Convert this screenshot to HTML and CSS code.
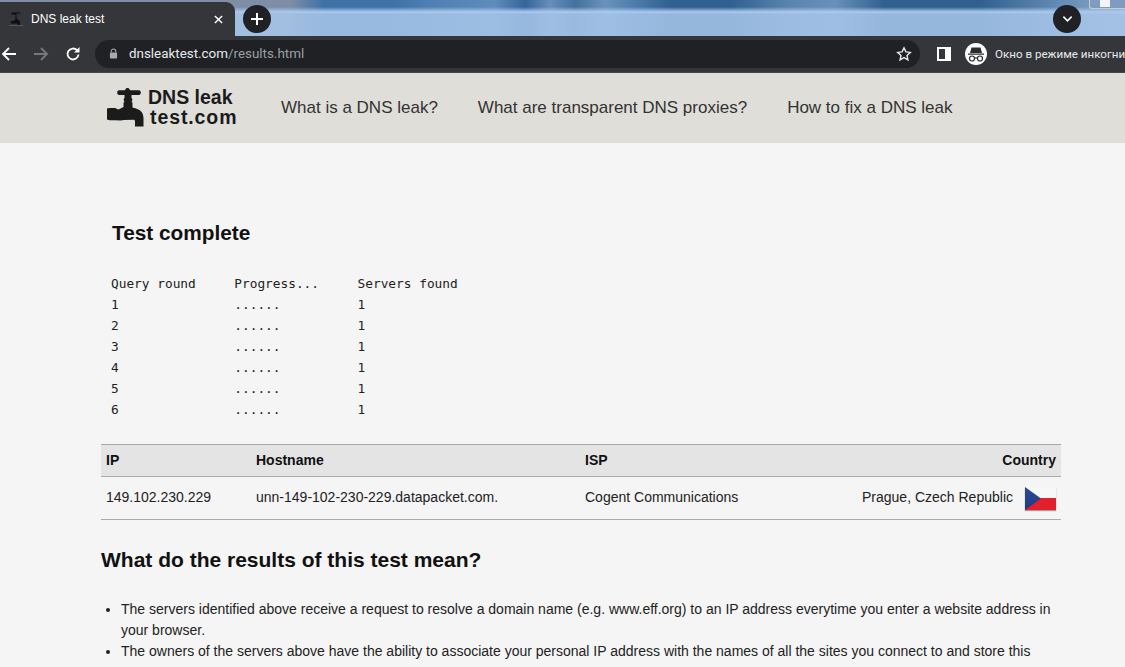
FILE: index.html
```html
<!DOCTYPE html>
<html lang="en">
<head>
<meta charset="utf-8">
<title>DNS leak test</title>
<link rel="stylesheet" href="styles.css">
</head>
<body>
<div class="browser">
  <div class="tabstrip">
    <div class="tab">
      <svg class="favicon" viewBox="0 0 16 16"><path d="M3.500 1.500h9v1h-4v5l3.500 3v3.500h-2.500v-1.500H3v-2.500h3l1.500-2v-4.500h-4z" fill="#0d0d0d"/><path d="M1 14.500h14" stroke="#55565a" stroke-width="1"/></svg>
      <span class="tab-title">DNS leak test</span>
      <svg class="tab-close" viewBox="0 0 10 10"><path d="M1 1l8 8M9 1l-8 8" stroke="#fff" stroke-width="1.600"/></svg>
    </div>
    <div class="round-btn new-tab"><svg viewBox="0 0 14 14"><path d="M7 1v12M1 7h12" stroke="#fff" stroke-width="2"/></svg></div>
    <div class="tabstrip-fill"></div>
    <div class="round-btn tab-search"><svg viewBox="0 0 12 8"><path d="M1.500 1.500L6 6l4.500-4.500" fill="none" stroke="#fff" stroke-width="1.800"/></svg></div>
    <div class="win-btn"><span class="win-glyph"></span></div>
  </div>
  <div class="toolbar">
    <svg class="nav-icon back" viewBox="0 0 16 16"><path d="M15 8H2M8 2L2 8l6 6" fill="none" stroke="#fff" stroke-width="1.800"/></svg>
    <svg class="nav-icon forward" viewBox="0 0 16 16"><path d="M1 8h13M8 2l6 6-6 6" fill="none" stroke="#77787a" stroke-width="1.800"/></svg>
    <svg class="nav-icon reload" viewBox="0 0 16 16"><path d="M13.500 8.500A5.500 5.500 0 1 1 12 4.200" fill="none" stroke="#fff" stroke-width="1.800"/><path d="M14.500 1v5.500H9z" fill="#fff"/></svg>
    <div class="omnibox">
      <svg class="lock" viewBox="0 0 10 12"><path d="M2.500 5V3.500a2.500 2.500 0 0 1 5 0V5" fill="none" stroke="#a8a9ab" stroke-width="1.200"/><rect x="1" y="5" width="8" height="6.500" rx="1" fill="#a8a9ab"/></svg>
      <span class="url"><span class="url-host">dnsleaktest.com</span>/results.html</span>
      <svg class="star" viewBox="0 0 16 16"><path d="M8 1.800l1.900 4.100 4.400.5-3.300 3 .9 4.400L8 11.600l-3.900 2.200.9-4.400-3.300-3 4.400-.5z" fill="none" stroke="#e8eaed" stroke-width="1.400"/></svg>
    </div>
    <div class="side-panel"></div>
    <div class="incognito">
      <span class="incognito-badge">
        <svg viewBox="0 0 22 22"><path d="M5 10l1.500-5.500h9L17 10zM3 10.500h16v1.300H3z" fill="#2b2c2e"/><circle cx="7" cy="15.500" r="2.500" fill="none" stroke="#2b2c2e" stroke-width="1.200"/><circle cx="15" cy="15.500" r="2.500" fill="none" stroke="#2b2c2e" stroke-width="1.200"/><path d="M9.500 15h3" stroke="#2b2c2e" stroke-width="1.200"/></svg>
      </span>
      <span class="incognito-label">Окно в режиме инкогни</span>
    </div>
  </div>
</div>
<header class="site-header">
  <a class="logo">
    <svg class="logo-tap" viewBox="0 0 38 40"><path d="M12.500 2.200h5.500C18.500.6 19.500 0 20.500 0s2 .6 2.500 2.200h9c1.200 0 1.800 1 1.800 2.300S33.200 7 32 7H24.500v3l1 1.500-.8 2 .8 1.500v4.500c4 1 8.500 2.500 10 6 .8 1.800 1 4 1 5V38.500h-8.500V33c-.2-.8-.8-1.200-1.500-1.200L17 32l-3.500.6-5.500-.4H2.500L0 31.500V20.500l2.500-.5H8l3.500 1.500 5-2.500V15l.8-1.500-.8-2 1-1.500V7h-5.500c-1.200 0-1.800-1.200-1.800-2.400s.6-2.400 1.800-2.400z" fill="#1b1b1b"/></svg>
    <span class="logo-text"><span class="logo-line1">DNS leak</span><span class="logo-line2">test.com</span></span>
  </a>
  <nav class="site-nav">
    <a>What is a DNS leak?</a>
    <a>What are transparent DNS proxies?</a>
    <a>How to fix a DNS leak</a>
  </nav>
</header>
<main class="content">
  <h2 class="status">Test complete</h2>
  <pre class="rounds">Query round     Progress...     Servers found
1               ......          1
2               ......          1
3               ......          1
4               ......          1
5               ......          1
6               ......          1</pre>
  <table class="results">
    <thead>
      <tr><th class="c-ip">IP</th><th class="c-host">Hostname</th><th class="c-isp">ISP</th><th class="c-country">Country</th></tr>
    </thead>
    <tbody>
      <tr>
        <td>149.102.230.229</td>
        <td>unn-149-102-230-229.datapacket.com.</td>
        <td>Cogent Communications</td>
        <td class="c-country"><span class="place">Prague, Czech Republic<span class="flag"></span></span></td>
      </tr>
    </tbody>
  </table>
  <h2 class="explain">What do the results of this test mean?</h2>
  <ul class="notes">
    <li>The servers identified above receive a request to resolve a domain name (e.g. www.eff.org) to an IP address everytime you enter a website address in your browser.</li>
    <li>The owners of the servers above have the ability to associate your personal IP address with the names of all the sites you connect to and store this</li>
  </ul>
</main>
</body>
</html>
```
FILE: styles.css
```css
html, body {
  margin: 0;
  height: 667px;
  overflow: hidden;
  background: #f5f5f5;
  color: #111;
  font-family: "Liberation Sans", Arial, sans-serif;
}
.tabstrip {
  height: 36px;
  display: flex;
  align-items: flex-end;
  background:
    linear-gradient(180deg, rgba(169,200,236,0) 0, rgba(169,200,236,0) 7px, #abcaee 12px, rgba(168,198,234,.85) 14px, rgba(168,198,234,.85) 36px),
    linear-gradient(90deg, #7d8ea6 0, #7d8ea6 290px, #3f70a6 325px, #3f70a6 390px, #4f80b2 430px, #5e8dbb 495px, #34649a 525px, #668fba 550px, #44719f 575px, #6a92bc 605px, #4d7cae 635px, #30608f 670px, #30608f 730px, #5a85b0 790px, #6890b9 835px, #30608f 885px, #30608f 980px, #648cb5 1060px, #8aa8c8 1125px),
    #a3c2e6;
}
.tab {
  width: 235px;
  height: 34px;
  box-sizing: border-box;
  padding: 0 10px 0 8px;
  background: #35363a;
  border-radius: 0 9px 0 0;
  display: flex;
  align-items: center;
  color: #fff;
  font-size: 12px;
}
.favicon { width: 16px; height: 16px; flex: none; }
.tab-title { margin-left: 7px; flex: 1; }
.tab-close { width: 9px; height: 9px; margin-right: 2px; }
.round-btn {
  width: 28px;
  height: 28px;
  border-radius: 50%;
  background: #202124;
  display: flex;
  align-items: center;
  justify-content: center;
  margin-bottom: 3px;
}
.new-tab { margin-left: 8px; }
.new-tab svg { width: 14px; height: 14px; }
.tab-search svg { width: 11px; height: 8px; }
.tabstrip-fill { flex: 1; }
.win-btn {
  width: 36px;
  height: 9px;
  align-self: flex-start;
  margin-left: 8px;
  box-sizing: border-box;
  padding-left: 10px;
  background: #7f9cc0;
  border: 1px solid #c4ccd6;
  border-top: 0;
  border-right: 0;
  border-radius: 0 0 0 3px;
}
.win-glyph {
  display: block;
  width: 10px;
  height: 7px;
  background: #f2f4f7;
}
.toolbar {
  height: 37px;
  box-sizing: border-box;
  background: #35363a;
  display: flex;
  align-items: center;
  padding-bottom: 1px;
  border-bottom: 1px solid #44454a;
}
.nav-icon { width: 16px; height: 16px; flex: none; }
.back { margin-left: 1px; }
.forward { margin-left: 16px; }
.reload { margin-left: 16px; }
.omnibox {
  margin-left: 14px;
  width: 825px;
  height: 28px;
  border-radius: 14px;
  background: #202124;
  display: flex;
  align-items: center;
  box-sizing: border-box;
  padding: 0 8px 0 14px;
  font-family: "Roboto", sans-serif;
  font-size: 13.400px;
}
.lock { width: 9px; height: 11px; flex: none; }
.url { margin-left: 11px; flex: 1; color: #9aa0a6; }
.url-host { color: #e8eaed; }
.star { width: 16px; height: 16px; }
.side-panel {
  width: 14px;
  height: 14px;
  box-sizing: border-box;
  margin-left: 17px;
  background: linear-gradient(90deg, #35363a 0 60%, #fff 60%);
  border: 2px solid #fff;
  flex: none;
}
.incognito {
  margin-left: 14px;
  display: flex;
  align-items: center;
  min-width: 0;
  flex: 1;
  white-space: nowrap;
}
.incognito-badge {
  width: 22px;
  height: 22px;
  border-radius: 50%;
  background: #fff;
  flex: none;
  display: flex;
}
.incognito-badge svg { width: 22px; height: 22px; }
.incognito-label {
  margin-left: 8px;
  color: #e8eaed;
  font-family: "Roboto", sans-serif;
  font-size: 11.600px;
}
.site-header {
  height: 70px;
  background: #dfded9;
  display: flex;
  align-items: center;
  padding-left: 107px;
}
.logo { display: flex; align-items: center; width: 174px; flex: none; }
.logo-tap { width: 38px; height: 40px; flex: none; }
.logo-text {
  margin: 0 0 2px 3px;
  display: flex;
  flex-direction: column;
  gap: 1px;
  color: #1b1b1b;
  font-weight: bold;
  font-size: 19.500px;
  line-height: 19px;
}
.logo-line2 { margin-left: 2px; letter-spacing: .9px; }
.site-nav { display: flex; gap: 40px; font-size: 17px; color: #333; }
.content { margin-left: 101px; width: 960px; }
.status {
  margin: 77px 0 0 11px;
  font-size: 20.800px;
  line-height: 26px;
}
.rounds {
  margin: 27px 0 0 10px;
  font-family: "DejaVu Sans Mono", "Liberation Mono", monospace;
  font-size: 12.800px;
  line-height: 21px;
  color: #222;
}
.results {
  margin-top: 24px;
  width: 960px;
  border-collapse: collapse;
  table-layout: fixed;
  font-size: 14px;
  color: #222;
}
.results th {
  height: 29px;
  padding: 0 5px 2px;
  text-align: left;
  background: #e4e4e4;
  color: #111;
  border-top: 1px solid #aaa;
  border-bottom: 1px solid #aaa;
}
.results td {
  height: 40px;
  padding: 0 5px 2px;
  border-bottom: 1px solid #aaa;
}
.c-ip { width: 140px; }
.c-host { width: 319px; }
.c-isp { width: 200px; }
.results .c-country { text-align: right; }
.place { display: inline-flex; align-items: center; gap: 12px; }
.flag {
  width: 31px;
  height: 23px;
  margin-top: 3px;
  background: linear-gradient(180deg, #f7f7f7 50%, #e2202c 50%);
  position: relative;
  box-shadow: 0 1px 1px rgba(0,0,0,.35);
}
.flag::before {
  content: "";
  position: absolute;
  left: 0;
  top: 0;
  width: 16px;
  height: 23px;
  background: linear-gradient(180deg, #2c4a9b, #1e3a80);
  clip-path: polygon(0 0, 100% 50%, 0 100%);
}
.explain {
  margin: 27px 0 0;
  font-size: 21px;
  line-height: 26px;
}
.notes {
  margin: 26px 0 0;
  padding-left: 20px;
  font-size: 14px;
  line-height: 21px;
  color: #222;
}
```
